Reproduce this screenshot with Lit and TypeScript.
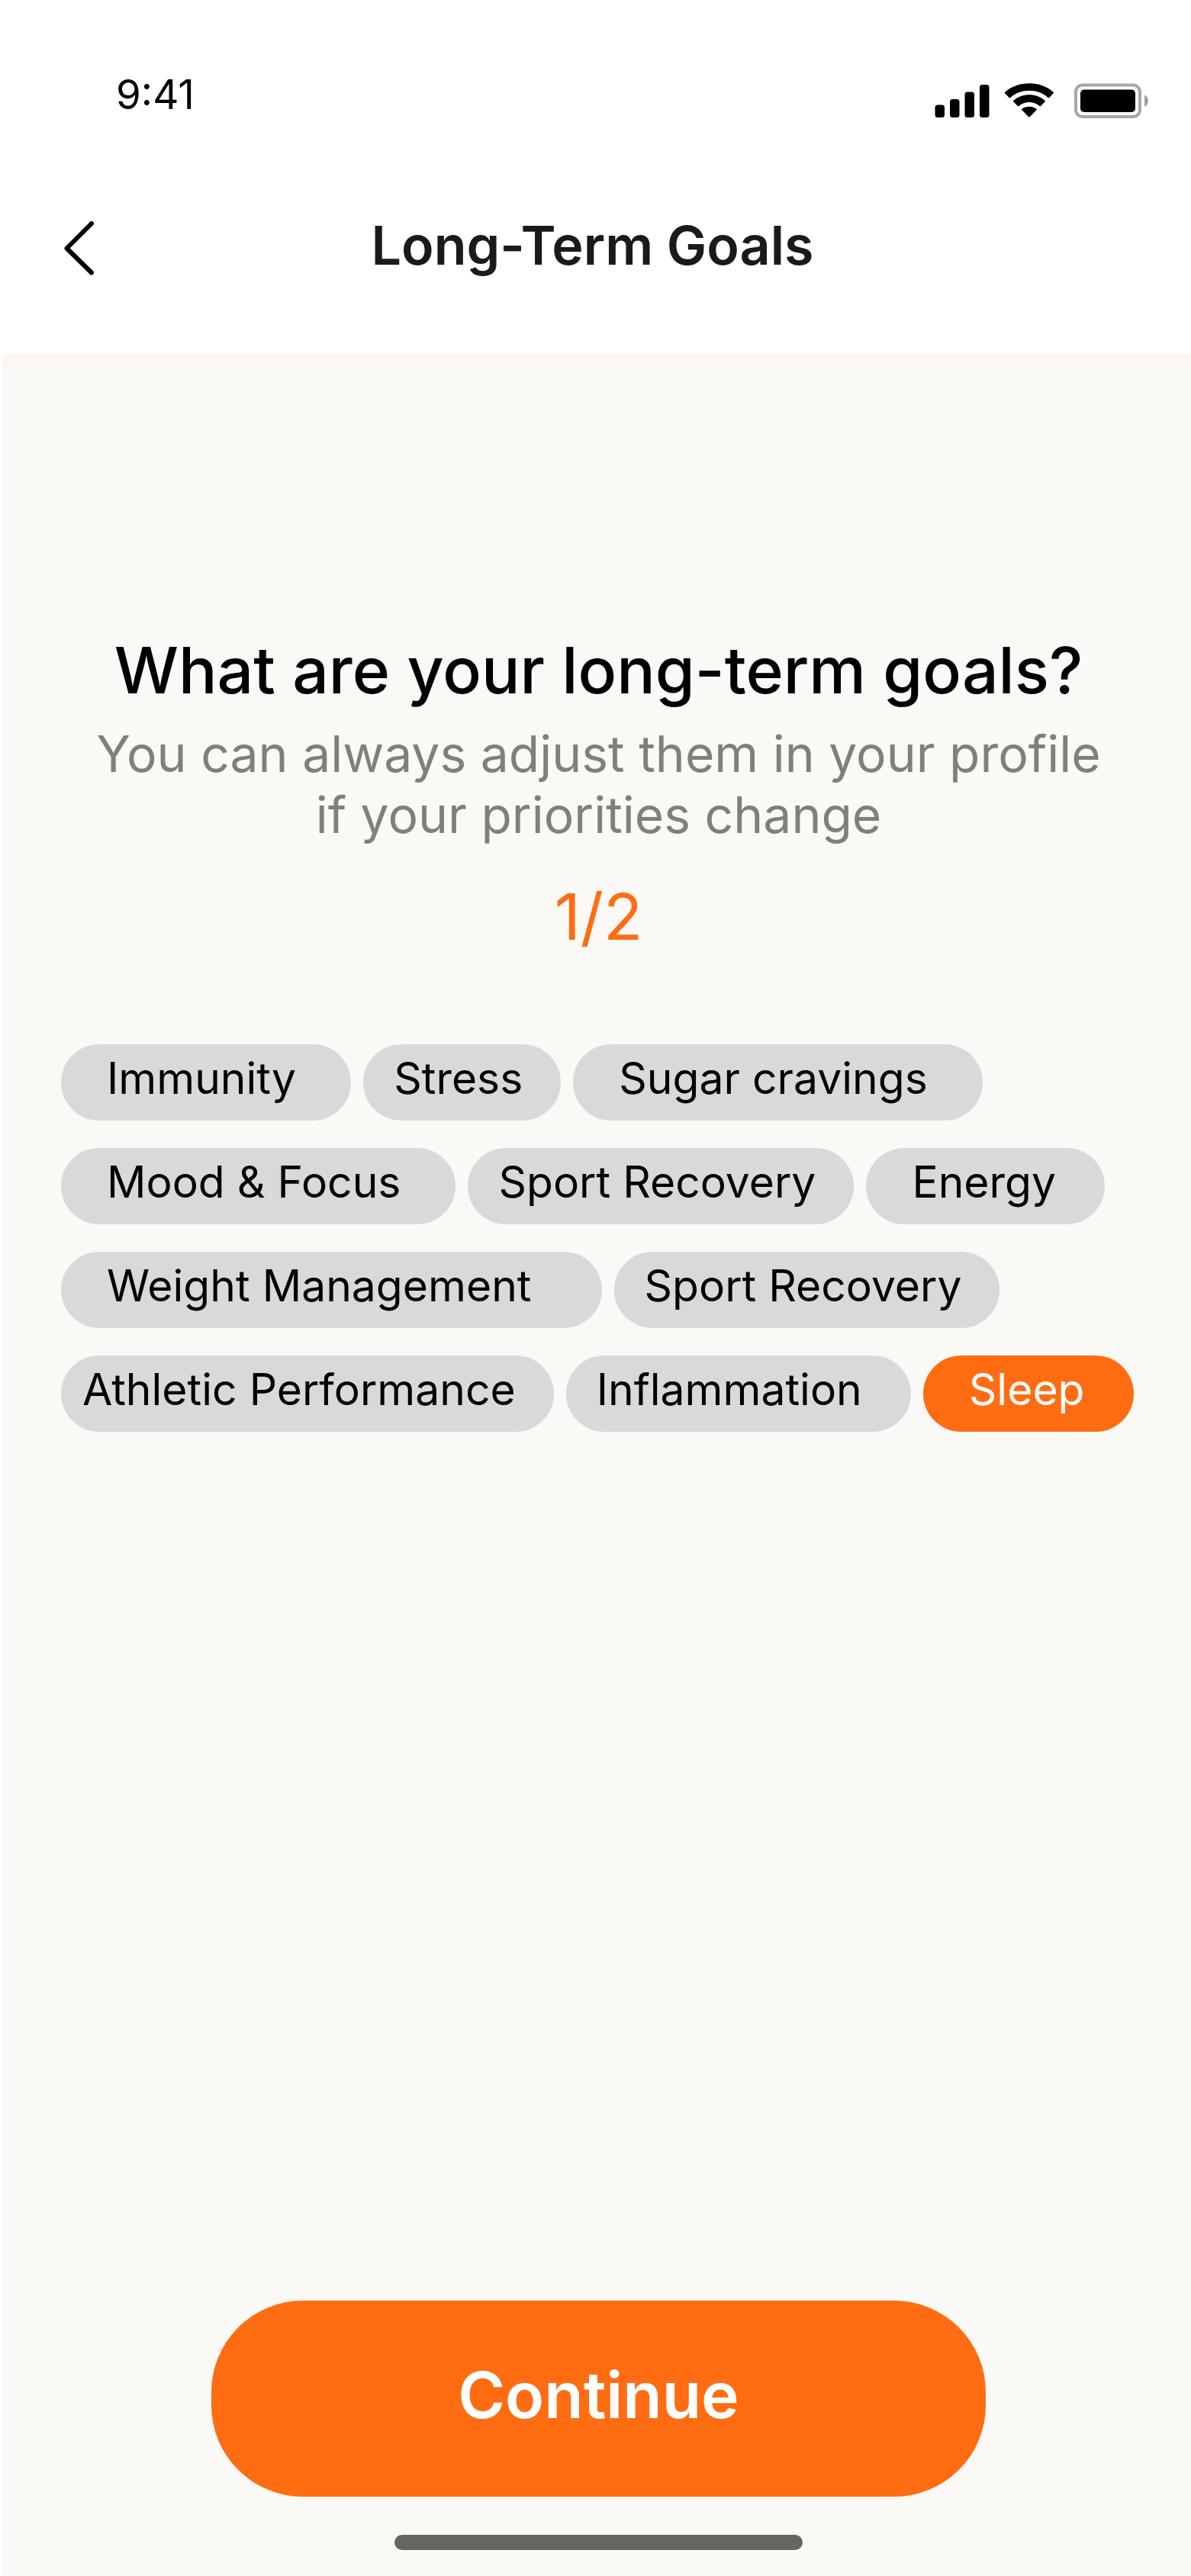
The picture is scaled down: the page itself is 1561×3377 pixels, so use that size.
import { LitElement, html, css } from "lit";
import { customElement, state } from "lit/decorators.js";
import { classMap } from "lit/directives/class-map.js";

type Inset = "roomy" | "even" | "loose" | "snug" | "open" | "tight";

interface Goal {
  id: string;
  label: string;
  inset: Inset;
}

const GOAL_ROWS: Goal[][] = [
  [
    { id: "immunity", label: "Immunity", inset: "roomy" },
    { id: "stress", label: "Stress", inset: "snug" },
    { id: "sugar", label: "Sugar cravings", inset: "roomy" },
  ],
  [
    { id: "mood", label: "Mood & Focus", inset: "roomy" },
    { id: "sport", label: "Sport Recovery", inset: "snug" },
    { id: "energy", label: "Energy", inset: "even" },
  ],
  [
    { id: "weight", label: "Weight Management", inset: "loose" },
    { id: "sport-2", label: "Sport Recovery", inset: "snug" },
  ],
  [
    { id: "athletic", label: "Athletic Performance", inset: "tight" },
    { id: "inflammation", label: "Inflammation", inset: "open" },
    { id: "sleep", label: "Sleep", inset: "even" },
  ],
];

@customElement("status-bar")
export class StatusBar extends LitElement {
  static styles = css`
    :host {
      display: flex;
      align-items: flex-end;
      justify-content: space-between;
      padding: 88px 56px 0 152px;
      color: #000;
    }
    .time {
      font-size: 53px;
      line-height: 72px;
    }
    .icons {
      display: block;
      width: 280px;
      height: 48px;
      padding-bottom: 4px;
    }
  `;

  render() {
    return html`
      <span class="time">9:41</span>
      <svg class="icons" viewBox="0 0 280 48" aria-hidden="true">
        <rect x="0.5" y="29.5" width="12.5" height="16.5" rx="3.5" />
        <rect x="20" y="22" width="12.5" height="24" rx="3.5" />
        <rect x="39.5" y="12.5" width="12.5" height="33.5" rx="3.5" />
        <rect x="59" y="3" width="12.5" height="43" rx="3.5" />
        <path
          d="M92.2 14.2a1 1 0 0 1 0-1.4C109 -2.6 139 -2.6 155.600 12.800a1 1 0 0 1 0 1.400L150.300 19.900a1.200 1.200 0 0 1-1.700 0C135.500 7.700 112.500 7.700 99.300 19.900a1.200 1.200 0 0 1-1.700 0Z"
        />
        <path
          d="M103.200 25.300a1 1 0 0 1 0-1.400C114.500 13.600 133.500 13.600 144.600 23.900a1 1 0 0 1 0 1.400L139.100 30.900a1.200 1.200 0 0 1-1.600 0C129.800 24.300 118.200 24.300 110.400 30.900a1.200 1.200 0 0 1-1.600 0Z"
        />
        <path
          d="M114.400 36.300a1 1 0 0 1 0-1.500C119.700 30.700 128.200 30.700 133.500 34.800a1 1 0 0 1 0 1.500L124.700 45.200a1.100 1.100 0 0 1-1.500 0Z"
        />
        <rect x="185" y="3.500" width="84" height="41.500" rx="9" fill="none" stroke="#a6a6a6" stroke-width="4" />
        <rect x="191" y="9.500" width="72" height="29.500" rx="5" />
        <path d="M275 16.500c6.500 2.500 6.500 13 0 15.500Z" fill="#a0a0a0" />
      </svg>
    `;
  }
}

@customElement("goal-chip")
export class GoalChip extends LitElement {
  static properties = {
    label: { type: String },
    inset: { type: String },
    selected: { type: Boolean },
  };

  declare label: string;
  declare inset: Inset;
  declare selected: boolean;

  static styles = css`
    :host {
      display: block;
    }
    .chip {
      display: block;
      border: 0;
      border-radius: 50px;
      padding: 9px 72px 19px 60px;
      background: #d9d9d9;
      color: #000;
      font: inherit;
      font-size: 57px;
      font-weight: 400;
      line-height: 72px;
      white-space: nowrap;
      cursor: pointer;
    }
    .chip.even {
      padding-right: 64px;
    }
    .chip.loose {
      padding-right: 92px;
    }
    .chip.snug {
      padding-left: 40px;
      padding-right: 50px;
    }
    .chip.open {
      padding-left: 40px;
      padding-right: 64px;
    }
    .chip.tight {
      padding-left: 28px;
      padding-right: 50px;
    }
    .chip.selected {
      background: #ff6c12;
      color: #fff;
    }
  `;

  render() {
    const classes = { chip: true, [this.inset]: true, selected: this.selected };
    return html`<button type="button" class=${classMap(classes)} aria-pressed=${this.selected ? "true" : "false"}>${this.label}</button>`;
  }
}

@customElement("app-root")
export class AppRoot extends LitElement {
  @state() private selected = new Set<string>(["sleep"]);

  static styles = css`
    :host {
      display: flex;
      flex-direction: column;
      min-height: 100vh;
      background: #fff;
      font-family: Inter, "Liberation Sans", sans-serif;
    }
    .header {
      display: grid;
      grid-template-columns: 1fr auto 1fr;
      align-items: center;
      padding: 120px 88px 100px 80px;
    }
    .back {
      justify-self: start;
      display: block;
      border: 0;
      padding: 0;
      background: none;
      cursor: pointer;
    }
    .chevron {
      display: block;
      width: 48px;
      height: 84px;
    }
    .title {
      margin: 0;
      color: #1a1a1a;
      font-size: 70px;
      font-weight: 600;
      line-height: 84px;
    }
    .panel {
      flex: 1;
      display: flex;
      flex-direction: column;
      margin-left: 4px;
      border-top: 16px solid #fcf6f3;
      padding: 351px 72px 34px 76px;
      background: #faf9f5;
    }
    .intro {
      display: flex;
      flex-direction: column;
      align-items: center;
      text-align: center;
    }
    .question {
      margin: 0;
      color: #000;
      font-size: 84px;
      font-weight: 500;
      line-height: 96px;
    }
    .hint {
      margin: 21px 0 46px;
      color: #7f7f7c;
      font-size: 66px;
      font-weight: 400;
      line-height: 80px;
    }
    .step {
      margin: 0;
      color: #ff6c12;
      font-size: 84px;
      font-weight: 400;
      line-height: 96px;
    }
    .goals {
      display: flex;
      flex-direction: column;
      gap: 36px;
      margin-top: 119px;
    }
    .row {
      display: flex;
      gap: 16px;
    }
    .footer {
      display: flex;
      flex-direction: column;
      align-items: center;
      gap: 50px;
      margin-top: auto;
    }
    .continue {
      width: 72%;
      border: 0;
      border-radius: 120px;
      padding: 76px 40px 85px;
      background: #ff6c12;
      color: #fff;
      font: inherit;
      font-size: 84px;
      font-weight: 600;
      line-height: 96px;
      cursor: pointer;
    }
    .indicator {
      width: 38%;
      height: 20px;
      border-radius: 10px;
      background: #656562;
    }
  `;

  private toggle(id: string) {
    const next = new Set(this.selected);
    if (!next.delete(id)) next.add(id);
    this.selected = next;
  }

  render() {
    return html`
      <status-bar></status-bar>
      <header class="header">
        <button class="back" type="button" aria-label="Back">
          <svg class="chevron" viewBox="0 0 48 84" aria-hidden="true">
            <path d="M40 13 7.500 45.500 40 77.500" fill="none" stroke="#000" stroke-width="6" stroke-linecap="round" stroke-linejoin="round" />
          </svg>
        </button>
        <h1 class="title">Long-Term Goals</h1>
      </header>
      <main class="panel">
        <section class="intro">
          <h2 class="question">What are your long-term goals?</h2>
          <p class="hint">You can always adjust them in your profile<br />if your priorities change</p>
          <p class="step">1/2</p>
        </section>
        <section class="goals" aria-label="Goals">
          ${GOAL_ROWS.map(
            (row) => html`
              <div class="row">
                ${row.map(
                  (goal) => html`<goal-chip
                    .label=${goal.label}
                    .inset=${goal.inset}
                    .selected=${this.selected.has(goal.id)}
                    @click=${() => this.toggle(goal.id)}
                  ></goal-chip>`
                )}
              </div>
            `
          )}
        </section>
        <footer class="footer">
          <button class="continue" type="button">Continue</button>
          <div class="indicator"></div>
        </footer>
      </main>
    `;
  }
}
